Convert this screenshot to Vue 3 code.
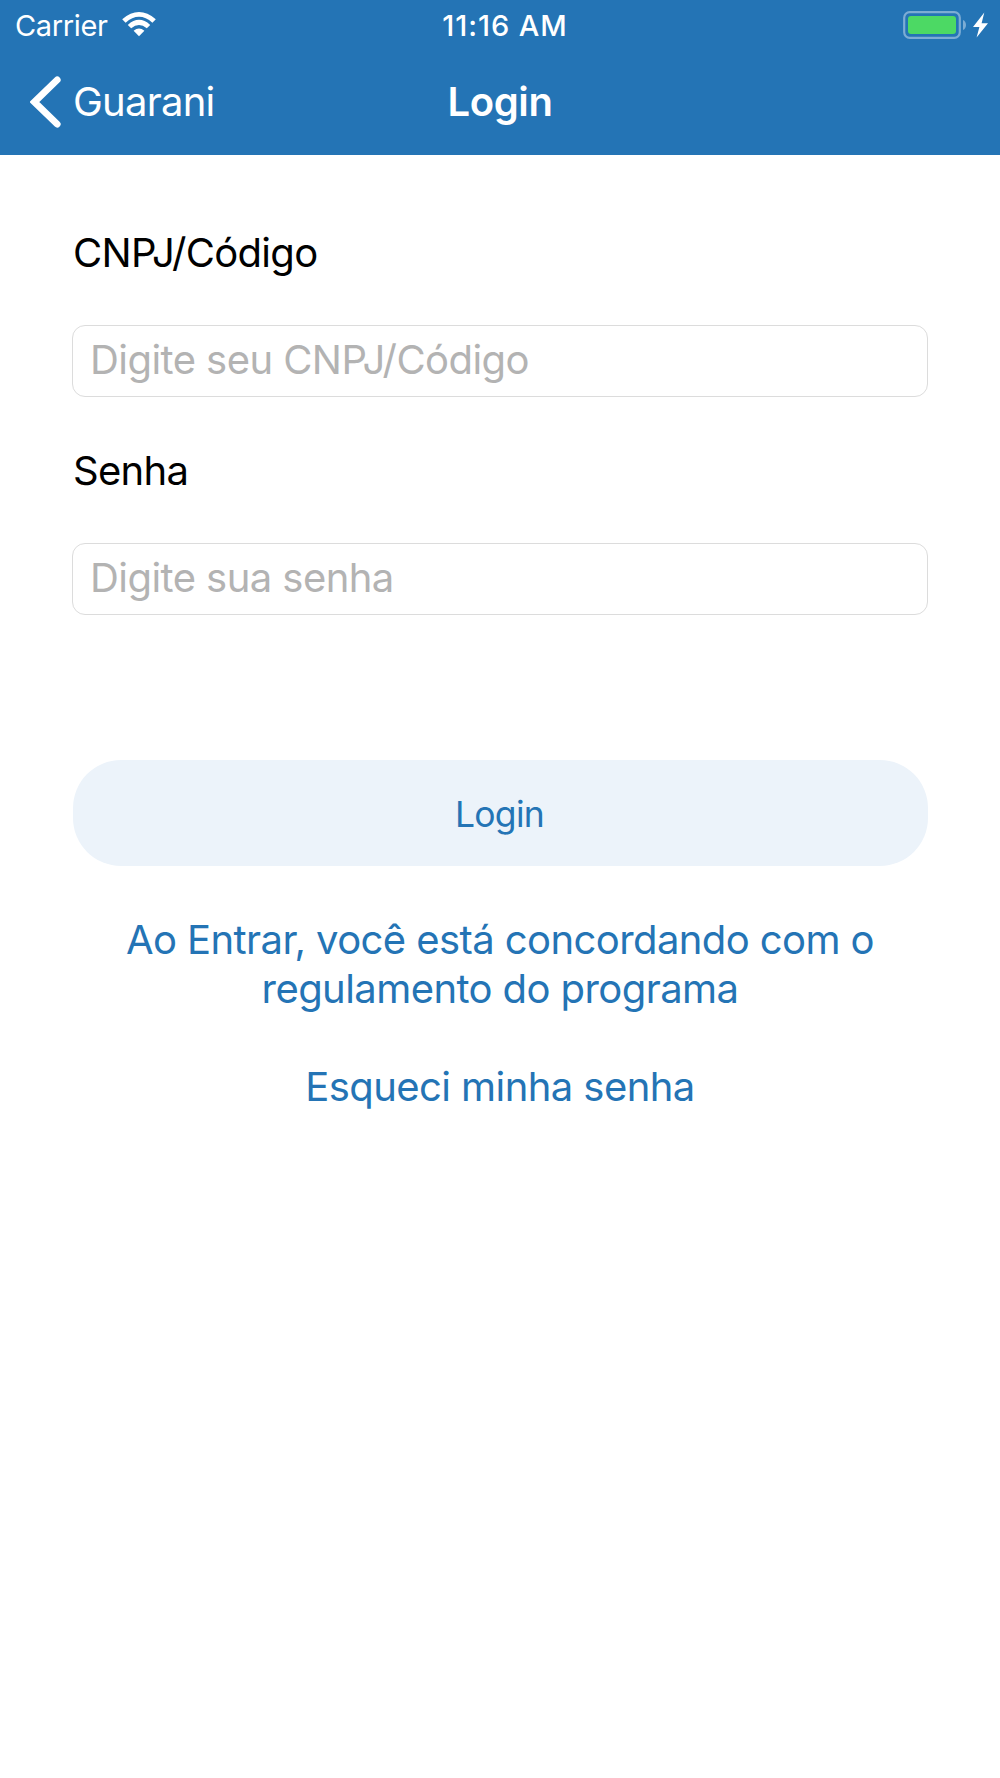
<script setup>
import { ref } from "vue";

const code = ref("");
const password = ref("");
</script>

<template>
  <main>
    <header>
      <div class="status-bar">
        <div class="status-left">
          <span class="carrier">Carrier</span>
          <svg class="wifi" width="34" height="25" viewBox="0 0 34 25">
            <path d="M0.2 7.2 Q17 -7.2 33.8 7.2 L30.4 10.7 Q17 -1.2 3.6 10.7 Z" />
            <path d="M5.8 12.9 Q17 2.8 28.2 12.9 L24.8 16.3 Q17 9.6 9.2 16.3 Z" />
            <path d="M11.6 18.8 Q17 14.2 22.4 18.8 L17 24.2 Z" />
          </svg>
        </div>
        <span class="time">11:16 AM</span>
        <div class="status-right">
          <svg width="86" height="28" viewBox="0 0 86 28">
            <rect x="1.2" y="1.2" width="55.6" height="25.6" rx="5.5" fill="none" stroke="#7cacd4" stroke-width="2.2" />
            <rect x="5" y="5" width="48" height="18" rx="3" fill="#4cd964" />
            <path d="M60 9 C64 10.5 64 17.5 60 19 Z" fill="#7cacd4" />
            <path d="M81.3 1.6 L70 16 L76.4 16 L73.6 26.6 L85 12.2 L78.6 12.2 Z" fill="#fff" />
          </svg>
        </div>
      </div>
      <nav>
        <button class="back">
          <svg width="32" height="52" viewBox="0 0 32 52">
            <path d="M27.2 3.9 L4.4 26 L27.2 48.1" />
          </svg>
          <span class="back-text">Guarani</span>
        </button>
        <h1 class="title">Login</h1>
        <span></span>
      </nav>
    </header>
    <form @submit.prevent>
      <label for="code">CNPJ/Código</label>
      <input id="code" v-model="code" type="text" placeholder="Digite seu CNPJ/Código" />
      <label for="password">Senha</label>
      <input id="password" v-model="password" type="password" placeholder="Digite sua senha" />
      <button type="submit" class="login-button">Login</button>
      <a class="link terms">
        <span>Ao Entrar, você está concordando com o</span>
        <span>regulamento do programa</span>
      </a>
      <a class="link forgot">Esqueci minha senha</a>
    </form>
  </main>
</template>

<style>
body {
  margin: 0;
  background-color: white;
}
</style>

<style scoped>
main {
  width: 1000px;
  height: 1778px;
  overflow: hidden;
  background-color: white;
  font-family: Inter, "Liberation Sans", sans-serif;
}
button,
input {
  font-family: inherit;
}
header {
  height: 155px;
  background-color: #2474b5;
  color: white;
}
.status-bar {
  display: grid;
  grid-template-columns: 1fr auto 1fr;
  align-items: center;
  height: 50px;
  padding: 0 11px 0 15px;
}
.status-left {
  display: flex;
  align-items: center;
  gap: 14px;
}
.carrier {
  padding-top: 1px;
  font-size: 29px;
  font-weight: 400;
  line-height: 50px;
  letter-spacing: -0.35px;
}
.wifi {
  fill: white;
  margin-bottom: 2px;
}
.time {
  padding: 1px 0 0 6px;
  font-size: 29px;
  font-weight: 550;
  line-height: 50px;
  letter-spacing: 0.95px;
}
.status-right {
  display: flex;
  justify-content: flex-end;
  margin-bottom: 1px;
}
nav {
  display: grid;
  grid-template-columns: 1fr auto 1fr;
  align-items: center;
  height: 104px;
  padding: 0 30px;
}
.back {
  display: flex;
  align-items: center;
  gap: 11px;
  padding: 0;
  border: none;
  background-color: transparent;
  color: white;
  cursor: pointer;
}
.back path {
  fill: none;
  stroke: white;
  stroke-width: 6.8;
  stroke-linecap: round;
}
.back-text {
  padding-bottom: 2px;
  font-size: 40px;
  font-weight: 400;
  letter-spacing: -0.75px;
}
.title {
  margin: 0;
  padding-bottom: 2px;
  font-size: 40px;
  font-weight: 600;
  letter-spacing: -0.4px;
}
form {
  display: flex;
  flex-direction: column;
  padding: 74px 72px 0;
}
label {
  padding-left: 1px;
  font-size: 40px;
  line-height: 48px;
  letter-spacing: -0.68px;
  color: black;
}
input {
  box-sizing: border-box;
  width: 856px;
  height: 72px;
  margin: 48px 0 50px;
  padding: 0 17px 4px;
  border: 1.5px solid #dcdcdc;
  border-radius: 13px;
  outline: none;
  background-color: white;
  font-size: 40px;
  letter-spacing: -0.56px;
}
input::placeholder {
  color: #b3b3b3;
  opacity: 1;
}
.login-button {
  width: 855px;
  height: 106px;
  margin: 95px 0 0 0.5px;
  padding: 2px 1px 0 0;
  border: none;
  border-radius: 48px;
  background-color: #ecf3fa;
  color: #2474b5;
  font-size: 35.5px;
  letter-spacing: -0.7px;
  cursor: pointer;
}
.link {
  font-size: 40px;
  line-height: 49px;
  letter-spacing: -0.58px;
  text-align: center;
  color: #2474b5;
}
.terms {
  display: flex;
  flex-direction: column;
  margin-top: 49px;
}
.forgot {
  margin-top: 49px;
}
</style>
